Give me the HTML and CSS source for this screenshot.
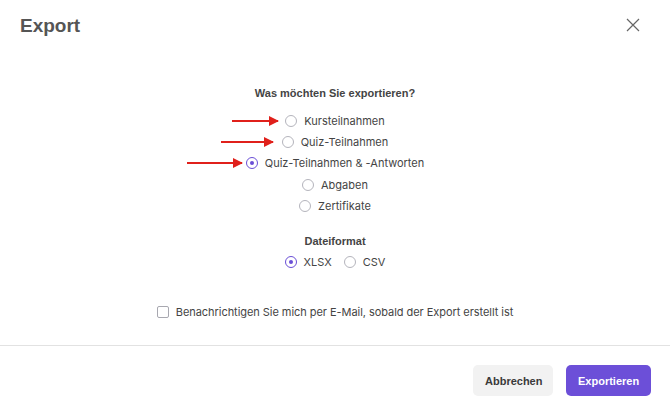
FILE: index.html
```html
<!DOCTYPE html>
<html lang="de">
<head>
<meta charset="utf-8">
<link rel="stylesheet" href="styles.css">
</head>
<body>
<div class="modal">
  <header class="modal-header">
    <h1 class="title">Export</h1>
    <button class="close" aria-label="Schließen">
      <svg width="14" height="14" viewBox="0 0 14 14"><path d="M1 1L13 13M13 1L1 13" stroke="#666" stroke-width="1.2" fill="none"/></svg>
    </button>
  </header>
  <main class="modal-body">
    <h2 class="section-title">Was möchten Sie exportieren?</h2>
    <div class="options">
      <label class="option"><span class="arrow arrow-1"></span><span class="radio"></span>Kursteilnahmen</label>
      <label class="option"><span class="arrow arrow-2"></span><span class="radio"></span>Quiz-Teilnahmen</label>
      <label class="option"><span class="arrow arrow-3"></span><span class="radio checked"></span>Quiz-Teilnahmen &amp; -Antworten</label>
      <label class="option"><span class="radio"></span>Abgaben</label>
      <label class="option"><span class="radio"></span>Zertifikate</label>
    </div>
    <h2 class="section-title format-title">Dateiformat</h2>
    <div class="formats">
      <label class="option"><span class="radio checked"></span>XLSX</label>
      <label class="option"><span class="radio"></span>CSV</label>
    </div>
    <label class="notify"><span class="checkbox"></span>Benachrichtigen Sie mich per E-Mail, sobald der Export erstellt ist</label>
  </main>
  <footer class="modal-footer">
    <button class="btn btn-secondary">Abbrechen</button>
    <button class="btn btn-primary">Exportieren</button>
  </footer>
</div>
</body>
</html>
```
FILE: styles.css
```css
* { box-sizing: border-box; }
html, body { margin: 0; padding: 0; background: #fff; }
body { font-family: "Inter", "Liberation Sans", sans-serif; color: #444; }
.modal { width: 670px; height: 403px; display: flex; flex-direction: column; overflow: hidden; }
.modal-header { display: flex; justify-content: space-between; align-items: center; padding: 13px 30px 0 20px; height: 38px; }
.title { margin: 0; font-family: "Liberation Sans", Arial, sans-serif; font-weight: 700; font-size: 19px; line-height: 24px; color: #555; }
.close { border: 0; background: none; padding: 0; width: 14px; height: 14px; display: flex; margin-top: -2px; }
.modal-body { display: flex; flex-direction: column; align-items: center; padding-top: 48px; height: 307px; }
.section-title { margin: 0; font-family: "Liberation Sans", Arial, sans-serif; font-weight: 700; font-size: 11px; line-height: 14px; color: #444; }
.options { display: flex; flex-direction: column; align-items: center; margin-top: 10px; }
.option { position: relative; display: flex; align-items: center; gap: 7px; height: 21.3px; font-size: 11px; color: #444; }
.radio { width: 12px; height: 12px; border-radius: 50%; border: 1px solid #b4b4bc; background: #fff; display: inline-flex; align-items: center; justify-content: center; }
.radio.checked { border-color: #6a4fd6; }
.radio.checked::after { content: ""; width: 4px; height: 4px; border-radius: 50%; background: #6a4fd6; }
.arrow { position: absolute; top: 50%; height: 2px; background: #e0201b; margin-top: -1px; }
.arrow::after { content: ""; position: absolute; right: -1px; top: -4px; border-left: 10px solid #e0201b; border-top: 5px solid transparent; border-bottom: 5px solid transparent; }
.arrow-1 { right: calc(100% + 7px); width: 46px; }
.arrow-2 { right: calc(100% + 9px); width: 52px; }
.arrow-3 { right: calc(100% + 4px); width: 55px; }
.format-title { margin-top: 18px; }
.formats { display: flex; gap: 12px; margin-top: 3px; }
.notify { display: flex; align-items: center; gap: 7px; margin-top: 32px; font-size: 11px; color: #444; letter-spacing: -0.05px; }
.checkbox { width: 12px; height: 12px; border: 1px solid #a8a8b0; border-radius: 2px; background: #fff; }
.modal-footer { border-top: 1px solid #e2e2e2; display: flex; justify-content: flex-end; align-items: flex-start; gap: 13px; padding: 19px 19px 0; flex: 1; }
.btn { border: 0; border-radius: 5px; height: 31px; padding: 0 12px; font-family: "Liberation Sans", Arial, sans-serif; font-size: 11px; font-weight: 700; }
.btn-secondary { background: #f2f2f2; color: #3a3a3a; width: 80px; }
.btn-primary { background: #6c4fd8; color: #fff; width: 85px; }
```
